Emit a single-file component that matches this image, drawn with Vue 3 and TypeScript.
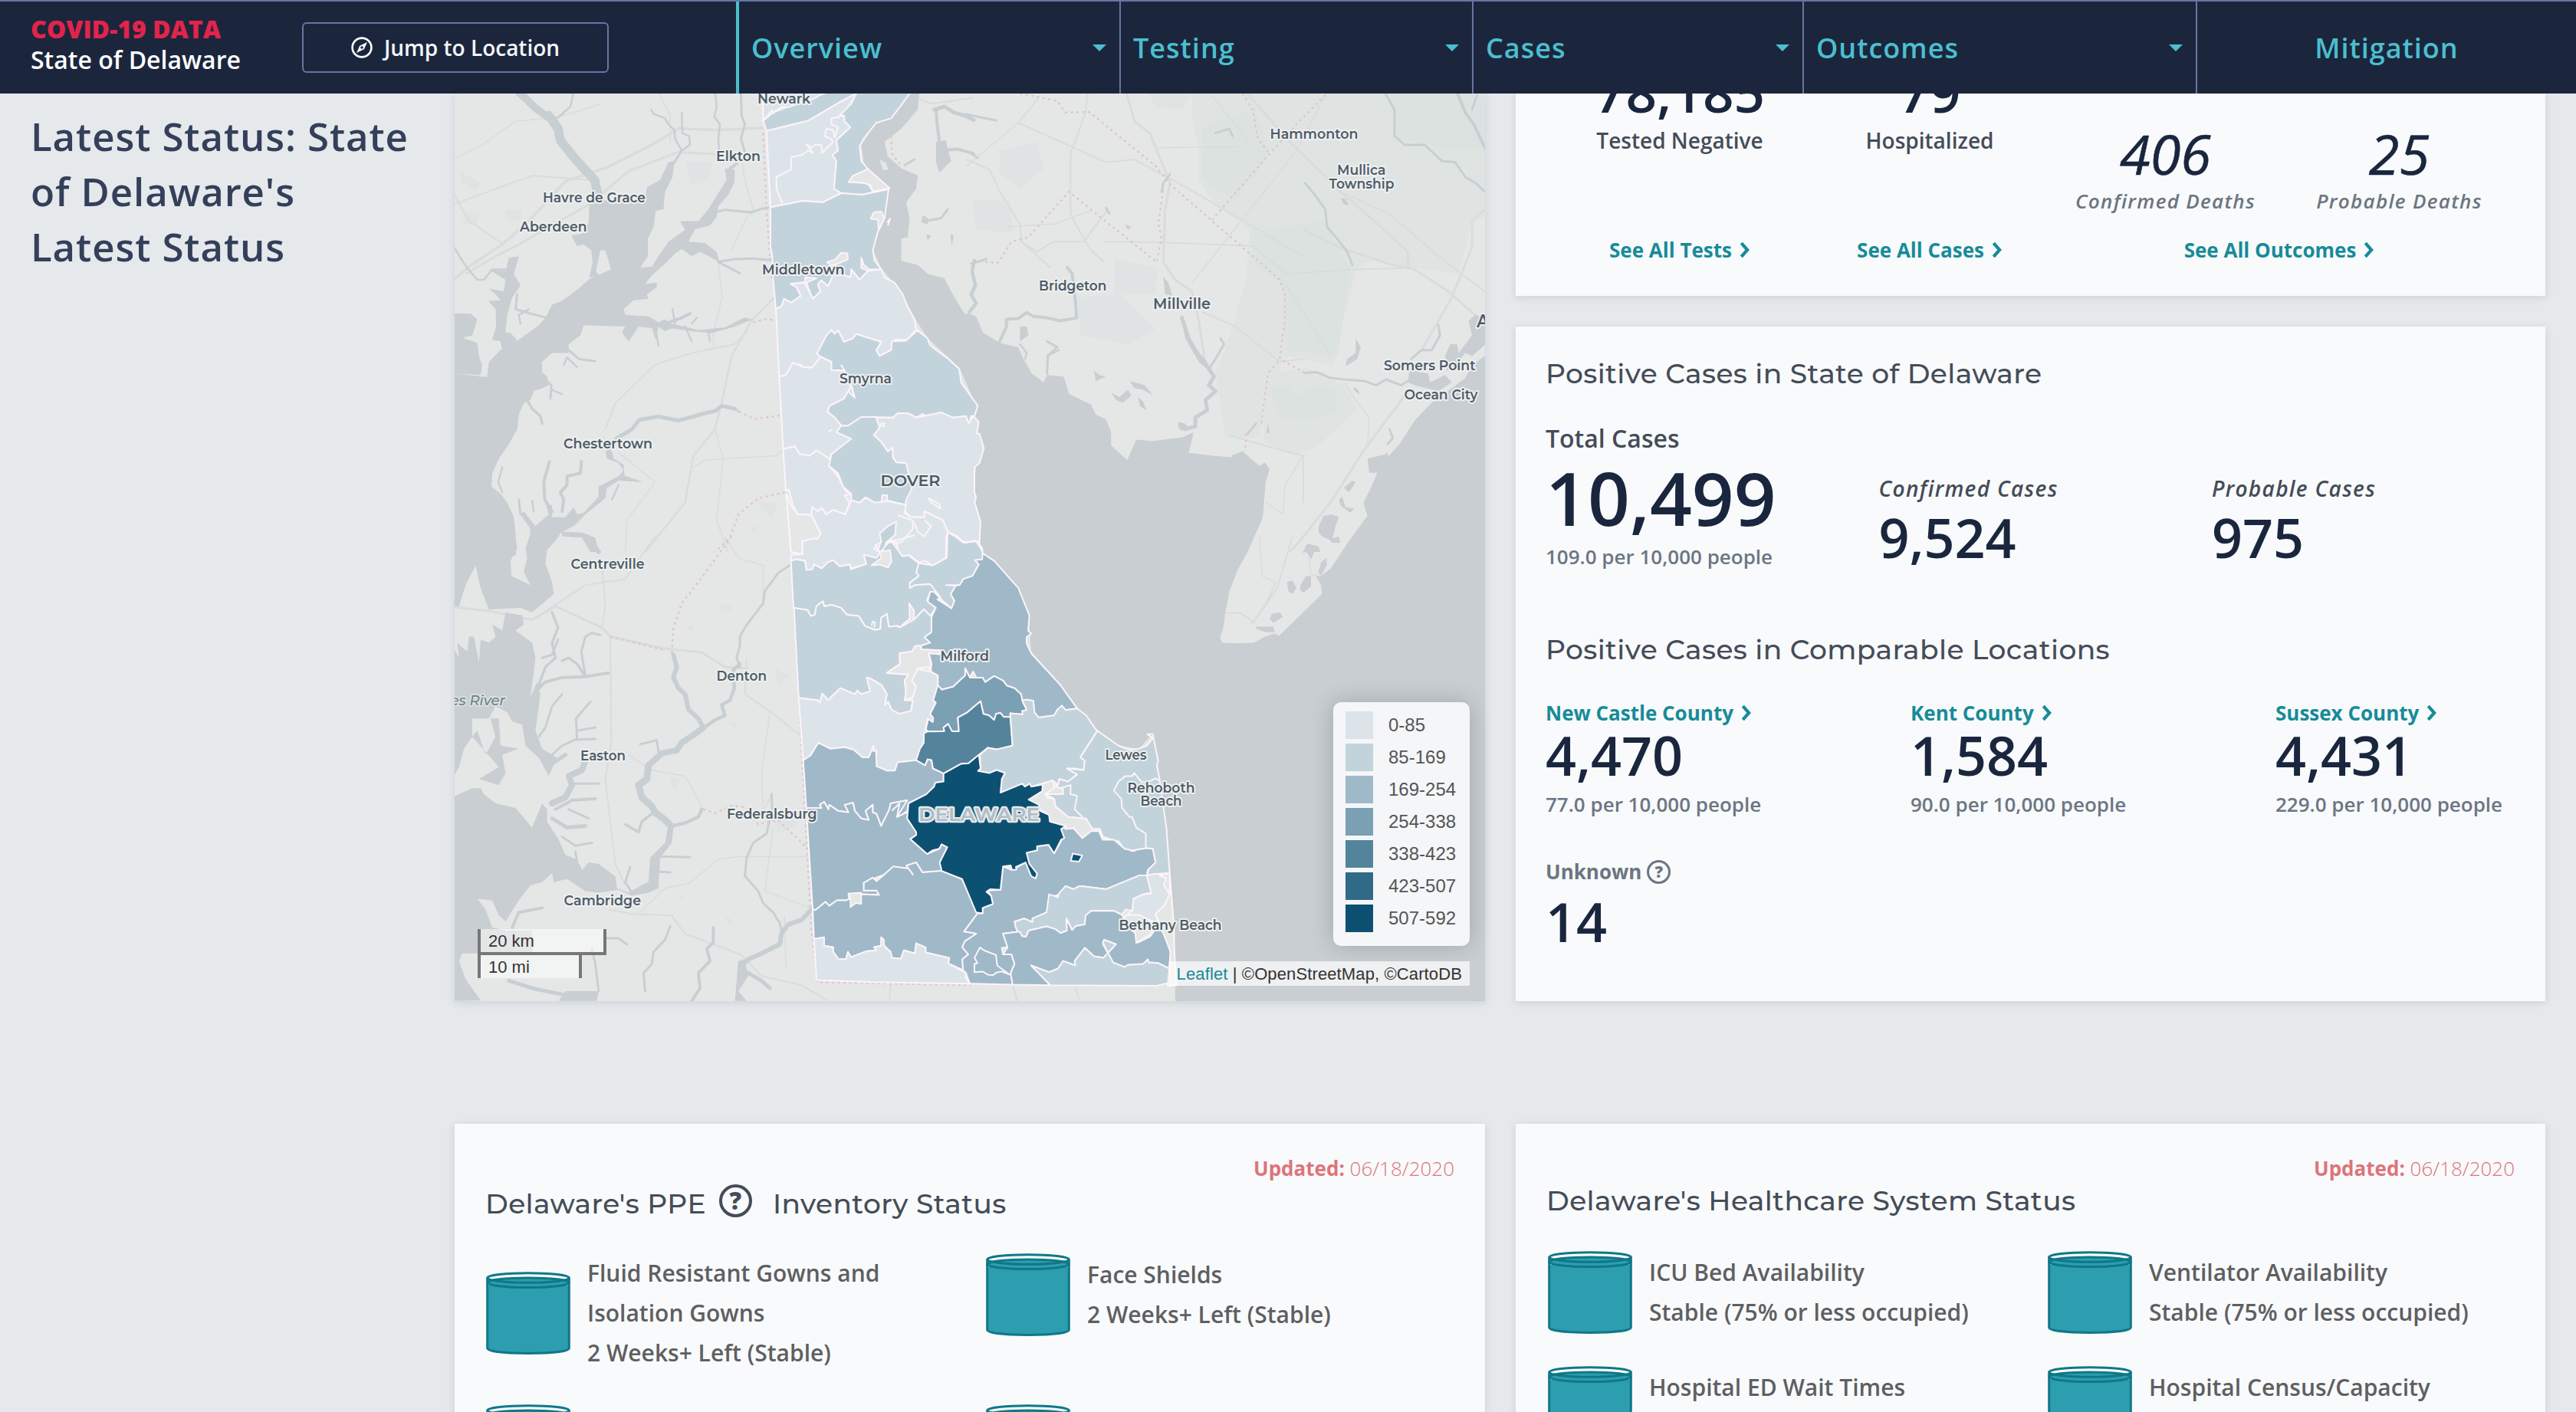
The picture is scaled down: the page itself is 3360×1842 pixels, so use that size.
<script setup lang="ts">
interface NavItem { label: string; width: number; caret: boolean }
interface Zip { level: number; pts: string }
interface Label { t: string; x1: number; x2: number; y: number; size: number; kind?: string }

const nav: NavItem[] = [
  { label: 'Overview', width: 500, caret: true },
  { label: 'Testing', width: 460, caret: true },
  { label: 'Cases', width: 431, caret: true },
  { label: 'Outcomes', width: 513, caret: true },
  { label: 'Mitigation', width: 496, caret: false },
]

const levels = ['#dce4ea', '#c2d3db', '#9fb9c8', '#7b9fb3', '#54849b', '#316a86', '#0c5172']
const ranges = ['0-85', '85-169', '169-254', '254-338', '338-423', '423-507', '507-592']
const LAND = -1

// Every map sheet has its own origin and scale; these project sheet points to map units.
const sheet = (ox: number, oy: number, sx: number, sy: number) => (s: string): string =>
  s.trim().split(/\s+/).map((p) => {
    const [x, y] = p.split(',').map(Number)
    return `${(ox + x * sx).toFixed(1)},${(oy + y * sy).toFixed(1)}`
  }).join(' ') + ' '
const A = sheet(590, 120, 0.43367, 0.38265)
const B = sheet(590, 700, 0.43367, 0.39541)
const C = sheet(1260, 120, 0.44005, 0.38265)
const D = sheet(980, 700, 1 / 3, 0.39541)
const E = sheet(1400, 700, 0.35714, 0.39541)

const water: string[] = [
  A('412,392 430,365 520,378 580,372 585,325 625,300 650,240 668,235 662,290 640,340 635,400 612,405 605,460 588,500 588,560 565,600 600,595 620,560 650,510 700,470 685,440 740,440 770,400 800,345 825,300 820,260 850,265 848,310 830,350 800,390 795,425 775,455 730,468 710,510 760,515 795,545 803,580 775,562 745,545 720,560 690,535 670,550 640,585 600,625 580,655 615,650 615,665 585,690 590,705 545,710 515,740 520,760 590,765 620,785 640,775 655,790 700,800 740,812 820,802 850,785 880,768 902,776 880,785 850,800 780,822 720,815 660,806 640,815 620,800 612,845 600,805 560,800 545,825 530,850 510,820 520,800 395,795 385,830 350,860 350,890 300,890 270,920 270,955 285,970 290,1000 270,1010 245,1020 235,1050 215,1060 200,1100 195,1150 170,1200 140,1250 120,1300 118,1345 145,1370 165,1400 185,1450 190,1500 192,1580 0,1580 0,960 105,972 110,920 145,880 200,845 230,820 260,795 280,770 300,725 330,712 380,670 415,635 478,605 460,540 445,540 432,610 440,625 412,632 422,580 418,540 395,520 375,525 358,490 400,480 410,440'),
  A('170,565 200,560 185,620 205,660 180,700 165,760 160,820 175,822 195,847 150,882 145,850 120,845 132,800 130,740 108,712 145,710 130,690 110,670 155,680 160,640 110,605 160,610'),
  A('0,755 55,755 75,775 60,830 30,838 75,855 80,900 90,930 85,965 0,960'),
  A('228,1580 235,1490 205,1440 215,1430 250,1480 290,1440 280,1400 300,1410 300,1450 340,1450 365,1415 375,1440 395,1435 440,1380 440,1345 500,1310 515,1290 500,1265 465,1250 460,1225 480,1225 485,1250 515,1270 518,1308 575,1330 500,1325 465,1350 460,1385 400,1440 370,1475 325,1505 310,1530 270,1580'),
  A('330,1500 390,1502 430,1520 440,1568 415,1568 390,1520 330,1515'),
  A('1455,170 1485,165 1490,195 1500,235 1465,275 1455,240'),
  B('0,0 190,0 195,40 175,80 178,130 235,160 215,115 225,70 220,40 232,0 320,0 285,40 280,90 300,150 305,190 240,250 205,235 110,240 85,170 70,95 40,160 20,230 0,230'),
  B('0,360 20,400 15,350 45,380 50,330 65,330 80,415 85,340 110,350 130,330 120,290 150,310 160,250 210,260 215,290 190,310 240,350 250,400 235,530 255,480 265,520 250,640 270,700 315,730 290,790 260,730 220,690 210,620 180,610 165,580 130,560 110,600 60,600 60,660 35,700 20,760 0,800'),
  B('0,860 30,845 60,830 85,830 95,850 130,880 190,895 240,960 270,880 285,900 285,940 320,1000 340,1050 375,1065 390,1100 410,1075 440,1080 490,1120 495,1160 530,1175 570,1150 590,1140 595,1060 640,1010 650,950 665,960 660,1010 625,1060 620,1160 590,1175 540,1185 500,1165 440,1175 400,1170 345,1130 305,1140 300,1110 270,1140 235,1150 200,1200 160,1270 140,1250 120,1200 75,1195 100,1230 120,1290 160,1300 240,1300 240,1375 30,1375 20,1400 40,1460 85,1530 0,1532'),
  B('320,1532 340,1500 440,1500 435,1532'),
  B('60,660 75,640 100,720 130,660 115,600 140,600 145,690 200,700 150,720 160,780 140,820 80,800 140,760'),
  B('860,1400 880,1395 890,1450 860,1500 885,1532 850,1532'),
]

const bay =
  A('1378,0 1405,0 1400,60 1350,125 1300,170 1310,220 1350,260 1400,285 1395,330 1365,375 1375,430 1370,495 1350,500 1350,575 1400,590 1430,620 1480,635 1500,680 1540,755 1560,758') +
  C('30,765 50,820 100,855 155,870 170,910 195,960 230,990 240,965 290,970 305,1030 370,1065 385,1100 415,1115 430,1160 430,1205 478,1255 505,1185 550,1190 640,1178 675,1160 660,1230 730,1240 790,1245 820,1225 870,1275 885,1262 900,1285 888,1330 880,1450 835,1568') +
  E('600,110 570,180 555,250 548,300 535,335 545,350 600,352 660,350 700,330 735,320 752,327 850,240 908,190 905,160 885,130 905,130 940,105 1010,10') +
  C('1190,1445 1178,1400 1200,1350 1230,1270 1285,1200 1330,1120 1380,1060 1440,1010 1480,975 1500,930 1545,895') +
  '1945,1310 1533,1310 ' +
  E('370,1300 350,1100 340,960 315,800 290,650 240,700 165,690 87,640') +
  D('1275,567 1210,490 1095,380 1085,260 1045,170 950,80 905,55') +
  A('1565,1400 1580,1215 1568,1050 1525,940 1430,840 1390,770 1355,690 1290,600 1265,540 1280,480 1310,330 1240,260 1230,180 1275,105 1320,90')

const eastWater: string[] = [
  C('1310,990 1315,940 1345,955 1370,960 1375,990 1420,965 1440,990 1400,1020 1330,1000'),
  C('1420,900 1435,860 1455,860 1460,890 1500,830 1490,780 1510,760 1540,770 1540,860 1500,900 1480,890 1450,930 1425,950'),
  C('1190,1250 1245,1235 1250,1225 1250,1260 1220,1298 1195,1298'),
  C('1045,1480 1060,1445 1085,1440 1105,1450 1095,1480 1085,1530 1055,1515 1045,1500'),
  C('1000,1568 1010,1540 1045,1550 1050,1568'), C('1105,1390 1115,1380 1125,1415 1150,1420 1140,1435 1110,1410'),
  C('1120,1350 1145,1325 1155,1330 1135,1365'), C('1155,840 1170,870 1160,910 1125,935 1130,910 1155,890'),
  C('585,630 600,650 612,695 590,690'), C('640,775 670,860 715,920 715,945 690,920 650,840'),
  C('430,1025 455,1040 480,1015 490,1035 465,1060 445,1050'), C('485,985 500,990 530,1000 555,1035 525,1015 500,1010'),
  C('510,1040 525,1055 535,1085 515,1070'), C('628,1125 650,1130 660,1145 640,1155 630,1145'),
  C('160,800 180,800 185,830 160,850'), C('380,950 395,965 415,970 385,985'),
  C('895,1130 900,1160 890,1165'), C('1110,360 1125,365 1135,385 1120,385'), C('470,450 490,460 480,470'),
  C('1150,1005 1165,1020 1165,1032 1150,1015'), C('820,1225 785,1240 800,1252 825,1240'),
  E('780,150 800,145 815,170 800,190 785,180'), E('830,160 850,130 868,130 868,165 840,185 828,175'),
  E('725,255 755,250 765,265 730,285 718,272'), E('668,297 730,297 735,315 700,315 668,305'),
  E('835,55 860,25 890,30 875,60 870,75 850,50'), E('935,10 970,0 975,20 945,20'), E('905,85 925,70 925,95 905,130 895,115'),
  A('1415,420 1430,430 1430,450 1410,445'), A('1425,485 1440,490 1430,505'), A('1498,485 1508,490 1502,525'),
]

const woods: string[] = [
  C('670,0 1568,0 1568,420 1500,440 1460,620 1330,600 1210,570 1160,600 1130,720 1090,930 940,900 870,1180 770,1180 740,960 790,800 830,640 840,470 730,370 690,300 690,190 670,90'),
  C('540,0 670,0 640,60 560,50'),
  C('900,960 1010,940 1120,1000 1160,1080 1040,1210 970,1240 880,1190'),
]
const woodsDark: string[] = [
  C('1240,0 1538,0 1538,190 1410,200 1380,180 1280,160 1270,60'),
  C('700,120 860,60 900,210 800,370 700,300'),
  C('840,480 1060,440 1140,600 1100,900 950,880 940,660 860,590'),
  C('900,1010 960,1000 980,1040 1030,1000 1100,1020 1100,1090 1010,1120 930,1110'),
]
const tints: string[] = [
  C('100,200 210,170 230,260 160,330 100,280'), C('20,370 130,370 140,480 30,470'), C('330,700 460,690 560,810 480,860 340,830'),
  C('440,570 570,600 560,690 440,690'), A('700,240 780,240 770,300 720,320'), A('20,270 90,310 70,335 30,310'),
  A('30,410 80,410 75,450 35,450'), A('160,400 210,405 200,440 160,435'), A('920,1400 980,1400 960,1450'), A('890,1480 920,1480 910,1510'),
  B('810,220 840,225 835,250 805,240'), B('700,290 725,295 720,315'), B('660,790 685,800 675,840 655,820'), B('830,610 855,610 850,640'),
  B('820,1250 850,1270 830,1280'), B('670,1180 695,1185 690,1200'), B('960,920 1000,900 1040,950 980,980'), B('970,430 1010,460 980,490'),
]

const rivers: { w: number; pts: string }[] = [
  { w: 10, pts: A('200,0 250,55 295,92') },
  { w: 12, pts: A('290,80 318,125 325,165 360,215 395,260 428,300 437,345 425,380') },
  { w: 2.5, pts: A('365,0 355,50 320,85 305,95') }, { w: 2.5, pts: A('790,0 795,50 788,85 805,110 800,160 803,205') },
  { w: 3, pts: A('868,0 870,80 880,110 868,160 880,205') }, { w: 2.5, pts: A('598,60 605,75 640,90 650,110 668,130 670,160 690,200 715,180 712,150 692,140 690,70') },
  { w: 3, pts: A('690,200 668,240 655,260') }, { w: 4, pts: A('825,270 855,245 860,225') },
  { w: 3, pts: A('790,410 820,402 900,410 930,398 950,395') }, { w: 3, pts: A('803,578 850,570 900,568 950,572 962,568') },
  { w: 3, pts: A('800,580 835,600 865,618') }, { w: 2.5, pts: A('0,520 30,575 45,600 75,640 95,640 120,605 160,605') },
  { w: 3, pts: A('195,690 190,740 220,750 250,760 285,770') }, { w: 2.5, pts: A('205,790 200,760 230,740') },
  { w: 4, pts: A('640,790 690,770 715,755') }, { w: 2.5, pts: A('670,790 662,740') }, { w: 2.5, pts: A('720,790 735,770') }, { w: 2.5, pts: A('700,800 720,850') },
  { w: 2.5, pts: A('770,815 775,850') }, { w: 2.5, pts: A('610,800 620,865') }, { w: 3, pts: A('350,880 380,910 430,918') }, { w: 2.5, pts: A('335,930 345,905 375,938') },
  { w: 3, pts: A('275,975 298,1000 295,1045') }, { w: 2.5, pts: A('298,1015 330,1030') }, { w: 3.5, pts: A('225,1050 240,1080 265,1105 270,1130') },
  { w: 5, pts: A('495,1180 540,1150 562,1118 620,1106 680,1120 720,1108 760,1095 790,1088 810,1070 850,1080') },
  { w: 2.5, pts: A('850,1080 862,1090') }, { w: 5, pts: A('470,1225 478,1195 500,1180') },
  { w: 4, pts: A('330,1430 335,1390 325,1365 345,1340 345,1310 385,1300 388,1260') }, { w: 4, pts: A('300,1430 278,1390 275,1330 292,1260') },
  { w: 3, pts: A('205,1440 200,1390') }, { w: 2.5, pts: A('245,1430 240,1395') }, { w: 2.5, pts: A('480,1390 500,1340') },
  { w: 2.5, pts: A('150,1365 138,1330 150,1280') },
  { w: 5, pts: A('1450,60 1480,50 1510,70 1540,80 1568,95') }, { w: 4, pts: A('1455,60 1458,110 1465,170 1470,200 1520,195 1568,210') },
  { w: 3, pts: A('1420,440 1470,430 1490,400') }, { w: 3, pts: A('1360,250 1390,230') },
  { w: 6, pts: B('405,0 440,50') }, { w: 3.5, pts: B('300,250 318,300 300,350 310,400 280,430 250,520') },
  { w: 3, pts: B('318,340 300,390 270,400') }, { w: 4, pts: B('250,510 280,480 330,465 400,462 440,455 470,450') },
  { w: 3.5, pts: B('400,462 375,420 350,400 330,410') }, { w: 3, pts: B('400,460 388,380 400,330 420,318 445,325') },
  { w: 3, pts: B('260,660 280,630 300,560 330,520') }, { w: 3, pts: B('300,720 330,690 370,670 430,668') }, { w: 3, pts: B('375,665 372,600 415,545') },
  { w: 3, pts: B('375,640 430,630') }, { w: 5, pts: B('285,760 340,720') }, { w: 8, pts: B('300,880 340,860 360,820 350,790 390,770 400,740') },
  { w: 3, pts: B('360,815 440,815') }, { w: 4, pts: B('310,900 360,870 430,865') }, { w: 5, pts: B('300,930 345,960 400,955') }, { w: 3, pts: B('350,900 410,930') },
  { w: 3, pts: B('330,990 370,1020 420,1010') }, { w: 3, pts: B('375,1070 370,1040') },
  { w: 2.5, pts: B('1025,20 1040,45') }, { w: 3, pts: B('1015,95 980,120 960,150 940,180 935,220 900,270 880,300 865,330 865,360 855,400 865,430') },
  { w: 4.5, pts: B('865,420 845,440 848,500 835,540 810,555 820,590 790,605 755,632') },
  { w: 6, pts: B('665,390 675,430 665,465 680,500 700,520 710,570 740,600 755,630') },
  { w: 8, pts: B('755,630 725,655 690,680 675,705 630,715 590,755') }, { w: 3, pts: B('565,685 615,672 620,710') },
  { w: 9, pts: B('590,755 585,800 560,820 570,860 600,890 610,910 640,935 658,955') },
  { w: 3.5, pts: B('605,910 570,940 560,975 520,950') }, { w: 4.5, pts: B('660,955 700,945 740,925 750,900') },
  { w: 3, pts: B('620,1055 715,1058') }, { w: 3, pts: B('615,1105 655,1108') }, { w: 3, pts: B('540,1175 520,1140 535,1090') },
  { w: 3, pts: B('960,850 962,900 945,980 905,1010 885,1060 880,1120 920,1170 935,1210 965,1240 985,1275 990,1300') },
  { w: 6, pts: B('1080,1230 1050,1265 1010,1280 990,1310 985,1345 930,1375 890,1395 865,1420') }, { w: 5, pts: B('890,1440 930,1465 955,1490') },
  { w: 4, pts: B('785,1290 785,1340 765,1360 775,1400 740,1440 745,1490 720,1532') }, { w: 3, pts: B('655,1285 640,1330 605,1370 600,1410 575,1440 580,1500') },
  { w: 3, pts: B('420,1360 430,1410 440,1500') }, { w: 3, pts: B('460,1325 500,1325 525,1345') }, { w: 5, pts: B('170,1465 240,1490 330,1510') },
  { w: 4, pts: B('170,1110 180,1180 160,1250') }, { w: 4, pts: B('270,1225 200,1240 180,1290') },
  { w: 3, pts: C('0,75 50,88 90,97') }, { w: 2.5, pts: C('0,200 35,225') },
  { w: 4.5, pts: C('25,575 18,610 28,660 15,690 30,720 10,750') }, { w: 3, pts: C('15,585 60,570') },
  { w: 4, pts: C('300,598 315,620 325,720 328,770 280,780 240,770 200,765 180,752 155,772 120,775 120,800 100,850') },
  { w: 3, pts: C('240,960 243,900 270,870 240,850') }, { w: 2.5, pts: C('240,900 275,880') }, { w: 2.5, pts: C('160,860 180,890 175,910') },
  { w: 5, pts: C('640,770 660,840 690,900 715,935 735,970 720,1000 740,1020 710,1050 715,1085 680,1110 680,1140 650,1150') },
  { w: 3, pts: C('720,945 745,900 765,860 755,840') }, { w: 3, pts: C('1240,0 1270,60 1270,150 1300,180 1360,180 1410,235 1450,240 1480,290 1510,310 1538,340') },
  { w: 4, pts: C('1455,0 1480,70 1505,110 1538,190') }, { w: 2.5, pts: C('1515,10 1500,60') },
  { w: 3, pts: C('1005,310 1040,360 1065,400 1070,460 1100,500 1130,545 1145,590') }, { w: 3, pts: C('740,140 780,125 790,150') },
  { w: 3, pts: C('1005,958 1040,955 1080,975 1120,980 1180,985 1215,1000 1245,980 1290,1000 1310,985') },
  { w: 3, pts: C('1320,910 1350,880 1380,880 1405,830 1400,795') }, { w: 3, pts: C('1255,1150 1265,1180 1250,1200') },
  { w: 3, pts: C('860,1130 835,1165') }, { w: 3, pts: C('580,340 585,310 605,280') }, { w: 3, pts: C('415,395 425,415') },
]

const roads: { w: number; pts: string }[] = [
  { w: 3.5, pts: A('0,645 50,595 150,520 230,440 340,305 470,255 600,180 680,125 800,130 935,122') },
  { w: 3, pts: A('40,620 130,560 200,520 290,460 410,385 530,270 680,205 790,212') }, { w: 2, pts: A('0,385 240,285 410,300') },
  { w: 2, pts: A('0,340 50,440 155,520') }, { w: 1.5, pts: A('0,230 90,180 190,100 320,85 450,40') }, { w: 1.5, pts: A('620,0 655,80 655,170') },
  { w: 2.5, pts: A('968,700 900,780 840,900 810,1060 790,1150 725,1240 700,1400 580,1568') }, { w: 2, pts: A('460,1150 490,1060 610,930 720,890 850,860 890,810') },
  { w: 1.5, pts: A('800,580 812,700 785,820 785,870') }, { w: 1.5, pts: A('840,540 880,440 905,400 880,300 868,210') }, { w: 1.5, pts: A('725,1280 760,1255 850,1248 975,1240 995,1220') },
  { w: 1.5, pts: A('790,1150 815,1250 795,1460 830,1568') }, { w: 1.5, pts: A('500,1230 610,1330 525,1460 520,1568') }, { w: 2, pts: A('1400,20 1440,40 1568,20') },
  { w: 3, pts: B('0,232 110,245 240,275 310,230 450,300 475,330 640,370 750,382 820,430 890,435') }, { w: 2, pts: B('240,275 400,160 520,140 610,0') },
  { w: 2, pts: B('475,330 478,680 460,800 490,1080 520,1150') }, { w: 2, pts: B('450,90 460,230 450,300') }, { w: 1.5, pts: B('820,0 860,70 935,95 935,220') },
  { w: 2, pts: B('885,400 880,520 960,580 1045,655') }, { w: 1.5, pts: B('955,580 930,780 935,910 960,850') }, { w: 2, pts: B('470,1230 540,1245 660,1250 700,1310 870,1380 930,1450 1050,1480 1130,1532') },
  { w: 1.5, pts: B('560,1245 640,1160 710,1145 800,1065 860,1055 1070,1057') }, { w: 1.5, pts: B('530,720 600,770 700,790 740,870 755,900') }, { w: 1.5, pts: B('965,960 940,1170 1080,1225') },
  { w: 3, pts: C('475,0 500,100 545,140 580,240 605,310 590,400 585,580 620,640 670,680 690,780 710,930') },
  { w: 2, pts: C('215,20 155,105 320,190 415,240 500,230 660,330 830,445 1000,560') }, { w: 2, pts: C('360,0 355,70 310,210 310,420 370,540 410,580') },
  { w: 2, pts: C('0,230 70,265 100,340 160,450 165,510 250,600') }, { w: 1.5, pts: C('0,255 155,105') }, { w: 2, pts: C('165,510 210,545 260,510 350,510 420,400') },
  { w: 1.5, pts: C('120,460 260,450 370,405') }, { w: 2, pts: C('410,510 560,512 850,525 950,620 1150,605 1310,600') }, { w: 1.5, pts: C('570,190 820,187') },
  { w: 3, pts: C('830,0 960,170 1110,340 1210,440 1310,545 1310,600') }, { w: 3, pts: C('1000,470 1110,530 1250,585 1330,605 1430,680 1538,790') },
  { w: 2, pts: C('1110,340 1260,420 1400,560 1538,680') }, { w: 3, pts: C('1538,400 1500,440 1500,530 1440,700 1350,880') },
  { w: 1.5, pts: C('1070,0 980,200 850,390 670,650') }, { w: 1.5, pts: C('720,0 840,170') }, { w: 3, pts: C('1310,1020 1180,1220 1080,1400 990,1530 960,1568') },
  { w: 2, pts: C('700,750 800,800 930,920 1000,910') }, { w: 2, pts: C('780,1170 900,1210 1000,1240 1000,1400') }, { w: 1.5, pts: C('1120,990 1160,1060 1195,1110 1190,1200') },
  { w: 1.5, pts: C('1000,1240 945,1340 940,1440 890,1400') }, { w: 1.5, pts: C('940,640 1080,900') },
  { w: 2, pts: E('800,0 745,170 650,290') }, { w: 2, pts: E('550,252 610,252 665,285') }, { w: 1.5, pts: E('680,0 690,130 740,150') },
  { w: 2, pts: E('740,150 700,230 650,290') }, { w: 1.5, pts: E('860,70 870,130 910,120') },
  { w: 1.5, pts: D('130,1250 135,1420') }, { w: 1.5, pts: D('545,1478 540,1532') }, { w: 2.5, pts: D('1025,1485 1040,1532') }, { w: 1.5, pts: D('1265,1485 1285,1532') },
]

const borders: string[] = [
  A('935,140 945,400 960,640'), A('905,785 940,774 973,778'), A('862,1090 910,1115 990,1102'), A('1000,1365 920,1385 860,1440 835,1520 790,1568'),
  B('840,0 800,60 740,150 690,220 665,300 660,385'), B('475,330 640,375'), B('755,900 790,912 840,888 880,893 920,950 980,935 1070,1030'),
  B('1020,60 1050,700 1080,1300 1098,1470 1560,1480'), A('1320,150 1322,210 1350,250'),
  C('160,5 270,30 295,70 365,68 560,250 610,320 730,440 930,640 945,690 945,780 930,910 1005,958'), C('1065,10 980,110 900,210 730,435'),
  C('820,5 850,60 865,160 900,210'), C('40,578 95,582 135,510 185,495 305,340 565,580 580,500 570,450 585,330'), C('925,920 895,960 875,1130'), C('830,1165 828,1225'),
]

const zips: Zip[] = [
  { level: 1, pts: A('935,98 965,70 1010,50 1120,5 1130,-10 1220,-10 1215,5 1165,35 1105,75 1070,98 945,133') },
  { level: 0, pts: A('933,-10 1130,-10 1090,22 1010,52 990,50 965,72 962,62 935,98') },
  { level: 0, pts: A('945,133 1070,98 1105,75 1165,35 1215,5 1190,55 1165,80 1180,85 1197,120 1155,165 1160,200 1145,215 1155,235 1150,330 1168,345 1115,376 1055,371 957,393') },
  { level: 1, pts: A('1215,5 1225,-10 1385,-10 1350,45 1320,90 1275,105 1240,155 1225,185 1230,235 1250,262 1195,305 1250,312 1265,340 1315,328 1232,350 1170,345 1148,330 1155,235 1143,215 1160,200 1155,165 1197,120 1180,100 1178,80 1165,80 1200,40') },
  { level: LAND, pts: A('1250,262 1315,328 1265,340 1258,318 1237,310 1192,307 1205,285') },
  { level: 1, pts: A('957,393 1055,371 1115,376 1170,345 1232,350 1312,332 1300,430 1280,475 1265,540 1270,575 1290,605 1255,605 1238,590 1230,565 1230,600 1250,610 1225,640 1200,605 1198,632 1180,625 1145,625 1130,662 1110,642 1100,655 1107,680 1085,705 1078,690 1065,650 1095,635 1062,632 1060,648 1018,653 1035,665 1048,695 1020,718 998,705 990,730 973,740 965,640 962,560 957,530') },
  { level: LAND, pts: A('1268,410 1290,408 1300,430 1282,472 1280,435 1258,432') },
  { level: LAND, pts: A('1127,580 1150,572 1170,548 1188,550 1190,570 1160,585 1140,592') },
  { level: 0, pts: A('973,740 990,730 998,705 1020,718 1048,695 1035,665 1018,655 1060,650 1078,690 1085,705 1107,680 1100,655 1110,642 1130,662 1145,625 1180,625 1198,632 1200,605 1225,640 1250,610 1290,605 1300,632 1330,650 1355,690 1368,730 1390,775 1395,810 1368,845 1330,845 1320,880 1285,900 1275,880 1290,852 1215,825 1205,840 1178,852 1160,812 1150,825 1140,812 1125,845 1097,892 1108,903 1082,940 1055,938 1050,930 1025,925 1003,965 983,970') },
  { level: 1, pts: A('1097,892 1125,830 1140,812 1150,825 1160,812 1178,852 1205,840 1215,825 1290,852 1275,880 1285,900 1320,880 1322,850 1365,848 1398,812 1430,840 1435,860 1455,880 1490,908 1525,945 1530,990 1568,1050') + C('35,1070 25,1105 15,1105 10,1130') + A('1553,1130 1545,1105 1505,1110 1470,1092 1425,1105 1415,1098 1395,1110 1370,1095 1340,1095 1325,1110 1230,1108 1190,1138 1170,1138 1150,1110 1128,1090 1135,1070 1178,1045 1200,1000 1210,1042 1195,1025 1180,950 1140,948 1140,920 1108,903') },
  { level: 0, pts: A('983,970 1003,965 1025,922 1055,938 1082,940 1108,903 1140,920 1140,948 1180,950 1170,932 1182,955 1210,1042 1200,1000 1178,1045 1135,1070 1128,1090 1150,1110 1170,1138 1155,1160 1200,1182 1185,1205 1140,1235 1133,1255 1095,1222 1075,1240 1045,1235 1030,1208 995,1217') },
  { level: 0, pts: A('995,1217 1030,1208 1045,1235 1075,1240 1095,1222 1138,1252 1133,1275 1160,1310 1175,1345 1185,1362 1200,1370 1180,1375 1195,1400 1182,1440 1145,1425 1125,1440 1110,1418 1100,1430 1082,1415 1080,1442 1040,1440 1025,1410 1012,1355 1003,1360') },
  { level: LAND, pts: A('1005,1370 1020,1412 1040,1440 1080,1442 1108,1505 1098,1525 1052,1530 1052,1575 1018,1568') },
  { level: 1, pts: A('1170,1138 1190,1138 1230,1108 1275,1108 1285,1145 1280,1165 1268,1170 1288,1190 1310,1225 1325,1212 1325,1245 1335,1262 1365,1265 1383,1350 1365,1408 1335,1400 1308,1392 1308,1375 1293,1375 1290,1405 1270,1400 1243,1382 1225,1400 1200,1392 1200,1370 1175,1345 1160,1300 1133,1275 1140,1235 1200,1182 1155,1160') },
  { level: 0, pts: A('1275,1110 1325,1110 1340,1095 1370,1095 1395,1110 1470,1092 1505,1110 1545,1105 1553,1130') + C('22,1105 38,1125 32,1165 40,1165 53,1215 40,1265 25,1280 25,1365 30,1380 26,1400 43,1465 40,1535 30,1530 0,1537') + A('1568,1533 1535,1535 1490,1500 1475,1460 1440,1440 1420,1430 1420,1450 1380,1450 1360,1430 1365,1390 1383,1350 1365,1265 1335,1262 1325,1245 1325,1212 1310,1225 1288,1190 1268,1170 1285,1145') },
  { level: 0, pts: A('1080,1442 1082,1415 1100,1430 1110,1418 1125,1440 1145,1425 1182,1440 1200,1392 1225,1400 1243,1382 1270,1400 1310,1395 1365,1408 1360,1435 1380,1450 1420,1450 1420,1430 1475,1460 1490,1500') + D('762,5 762,70 710,95 680,80 655,85 620,62 580,65 570,25 545,12 525,30 525,60 510,85 470,95 455,90 440,60 450,90 390,105 385,92 345,98 320,78 300,85 275,105 245,92 240,108 215,110 210,80 175,75 155,80 155,60 200,58 200,15 250,5') + A('1098,1525 1108,1505') },
  { level: 1, pts: A('1285,1505 1310,1480 1335,1465 1332,1510 1305,1535 1300,1568 1280,1565 1290,1530') },
  { level: 1, pts: D('768,-15 800,-5 830,20 880,15 905,50 905,75 875,78 890,92 865,130 830,140 815,160 762,160 800,162 780,190 795,212 783,237 740,205 728,207 700,157 640,160 620,170 620,152 655,130 645,118 655,88 710,95 765,70') },
  { level: 1, pts: C('0,1537 30,1530 48,1555 48,1568') + D('905,45 880,15 830,20 790,-5 768,-15') },
  { level: 1, pts: D('155,80 175,75 210,80 215,110 240,108 245,92 275,105 300,85 320,78 345,98 385,92 390,108 450,90 440,60 490,70 525,30 545,12 570,40 590,65 615,62 655,88 645,118 655,130 620,152 620,170 640,160 700,157 740,200 700,182 687,210 722,235 700,262 675,240 635,275 637,245 618,220 620,270 580,300 572,295 538,297 530,255 508,268 505,305 485,308 460,300 445,295 420,262 375,258 350,235 315,225 285,230 280,213 255,230 248,258 232,262 220,242 165,235') },
  { level: LAND, pts: D('543,45 548,82 535,102 500,92 470,95 510,70 500,50') },
  { level: 1, pts: D('167,235 220,242 232,262 248,258 255,230 280,213 285,230 315,225 350,235 375,258 420,262 445,295 485,308 505,305 508,268 530,255 538,297 572,295 580,300 635,275 675,240 705,265 705,315 678,332 700,350 665,360 640,362 630,380 580,385 582,420 530,450 615,455 600,475 605,515 600,540 632,540 625,575 580,585 550,572 535,545 522,555 530,520 510,490 470,470 452,465 465,510 430,520 415,508 405,520 348,500 300,540 278,518 268,548 262,540 185,532') },
  { level: LAND, pts: D('640,362 665,360 665,372 738,375 738,388 695,385 705,430 650,435 630,475 645,495 632,530 600,540 605,515 600,475 615,455 530,450 582,420 580,385 630,378') },
  { level: 0, pts: D('185,532 262,540 268,548 278,518 300,540 348,500 405,520 415,508 430,520 465,510 452,465 470,470 510,490 530,520 522,555 535,545 550,572 580,585 625,575 632,540 605,540 632,530 645,495 628,475 650,437 695,445 700,430 702,445 730,458 730,500 712,540 722,548 700,585 712,598 710,612 690,600 680,640 692,645 675,652 675,680 660,700 645,738 572,745 562,772 530,772 490,758 488,705 478,708 478,690 460,728 435,728 400,703 365,695 310,700 262,680 232,722 203,738') },
  { level: 2, pts: D('905,55 950,80 1045,170 1088,260 1083,310 1095,320 1077,332 1077,352 1095,385 1210,490 1275,567 1230,572 1215,558 1212,570 1198,570 1185,590 1125,597 1108,580 1103,542 1080,538 1060,542 1055,520 1030,500 1000,492 985,475 950,460 915,480 905,465 880,465 868,445 855,465 837,435 837,458 790,495 745,505 730,490 730,458 702,445 705,420 695,385 738,388 738,375 665,372 665,360 700,350 678,332 705,315 705,265 722,235 690,215 700,182 715,182 740,205 728,207 783,237 795,212 780,190 800,162 815,160 830,140 865,130 890,92 875,78 903,75') },
  { level: 3, pts: D('745,505 790,495 837,458 837,435 855,465 880,465 905,465 915,480 950,460 985,475 1000,492 1030,500 1055,520 1062,545 1078,572 1060,575 1062,587 1013,583 1013,595 988,595 975,582 958,585 950,605 930,590 908,585 897,543 845,580 808,597 812,642 785,642 770,618 752,630 755,642 690,643 683,635 692,602 710,612 712,598 700,585 722,548 712,540 730,490') },
  { level: 4, pts: D('675,650 690,643 755,642 752,630 770,618 785,642 812,642 808,597 845,580 897,543 908,585 930,590 950,605 958,585 975,582 988,595 1013,595 1022,690 960,702 925,697 890,720 850,748 820,750 752,782 710,765 705,738 690,735 680,755 645,738 660,700 675,680') },
  { level: 1, pts: D('1013,583 1062,587 1060,575 1078,572 1060,540 1080,538 1103,542 1108,580 1125,597 1185,590 1198,570 1215,558 1230,572 1275,567 1310,590 1353,642 1288,728 1305,740 1300,770 1265,765 1235,765 1275,785 1240,808 1205,800 1200,820 1180,805 1095,825 1090,815 1070,825 1060,815 975,845 980,800 992,780 960,770 932,780 887,773 897,765 895,720 925,697 960,702 1022,690') },
  { level: 1, pts: E('87,640 165,690 205,703 240,700 268,690 290,665 270,652 290,652 310,740 305,755 315,800 330,900 340,960 352,1110 300,1113 268,1118 275,1097 300,1075 290,1030 265,1028 210,1037 185,1030 165,1005 105,1000 95,965 60,965 30,930') + D('1300,930 1240,925 1190,890 1185,865 1150,850 1220,850 1220,832 1180,822 1200,820 1205,800 1240,808 1275,785 1235,765 1300,770 1305,740 1288,728 1353,642') },
  { level: LAND, pts: D('1140,815 1180,805 1185,830 1150,850 1158,862 1185,865 1190,890 1240,925 1310,930 1335,965 1365,965 1375,990 1410,1000 1375,1000 1360,972 1330,972 1295,995 1260,962 1230,965 1230,955 1168,940 1165,918 1130,900 1085,868 1138,840') },
  { level: 2, pts: D('1230,955 1228,965 1260,962 1295,995 1330,972 1360,972 1375,1000 1420,1000 1460,1030 1500,1037') + E('210,1037 265,1028 290,1030 300,1075 272,1100 268,1118 240,1118 120,1163 30,1153') + D('1285,1153 1260,1163 1230,1153 1205,1180 1170,1190 1165,1230 1155,1240 1100,1260 1100,1272 1068,1260 1030,1270 1035,1290 1050,1303 985,1310 1003,1355 980,1357 985,1378 1000,1368 1018,1378 1030,1410 1015,1440 1022,1478 855,1475 840,1440 828,1430 825,1395 848,1378 825,1355 835,1335 880,1310 832,1303 885,1243 905,1243 905,1225 945,1212 938,1185 925,1168 975,1165 985,1088 1020,1100 1073,1075 1112,1128 1118,1112 1088,1085 1077,1043 1118,1035 1118,1022 1163,1017 1185,1045 1215,1000 1212,965') },
  { level: 2, pts: D('203,738 232,722 262,680 310,700 365,695 400,703 435,728 460,728 478,690 478,708 488,705 490,758 530,772 562,772 572,745 645,738 680,755 690,735 705,738 710,765 752,782 752,808 720,812 715,825 685,850 615,880 610,905 570,930 555,925 550,905 610,870 545,880 540,900 508,955 490,915 475,910 475,885 447,905 460,935 430,930 405,905 398,878 365,885 380,910 340,905 305,885 302,900 285,875 268,885 275,895 215,895') },
  { level: 2, pts: D('215,895 275,895 268,885 285,875 302,900 305,885 340,905 380,910 365,885 398,878 405,905 430,930 460,935 447,905 475,885 475,910 490,915 508,955 540,900 545,880 610,870 570,925 612,908 610,930 645,975 645,985 622,998 688,1047 735,1030 745,1015 767,1025 737,1075 750,1103 670,1108 645,1075 632,1078 630,1115 607,1085 615,1095 555,1090 520,1115 475,1130 440,1142 440,1168 490,1168 500,1182 430,1180 380,1178 385,1210 370,1200 335,1200 305,1218 290,1205 250,1233 240,1228') },
  { level: 2, pts: D('240,1228 250,1233 290,1205 305,1218 335,1200 370,1200 430,1180 500,1182 490,1168 440,1168 440,1142 475,1125 490,1137 520,1115 555,1088 615,1095 632,1115 607,1085 645,1075 670,1108 745,1103 825,1130 885,1243 832,1303 880,1310 835,1335 825,1355 848,1378 825,1395 828,1430 770,1408 775,1390 682,1372 682,1355 645,1342 640,1375 597,1365 585,1393 550,1390 545,1370 520,1350 518,1330 508,1322 508,1350 480,1355 490,1365 450,1368 390,1388 378,1370 370,1395 340,1393 320,1370 320,1355 285,1350 285,1322 245,1328') },
  { level: LAND, pts: D('380,1178 430,1175 430,1212 410,1208 388,1222 388,1195') },
  { level: 0, pts: D('245,1328 285,1322 285,1350 320,1355 320,1370 340,1393 370,1395 378,1370 390,1388 450,1368 490,1365 480,1355 508,1350 508,1322 518,1330 520,1350 545,1370 550,1390 585,1393 597,1365 640,1375 645,1342 682,1355 682,1372 775,1390 770,1408 840,1440 838,1455 855,1475 475,1470 255,1463') },
  { level: 1, pts: D('1030,1270 1068,1260 1100,1272 1100,1260 1155,1240 1165,1180 1200,1190 1205,1175 1230,1153 1260,1163 1285,1153') + E('30,1153 120,1163 240,1118 268,1118 285,1175 255,1180 220,1195 215,1235 190,1230 178,1248 150,1235') + D('1420,1235 1330,1235 1308,1250 1305,1280 1270,1285 1255,1298 1233,1260 1235,1300 1210,1308 1190,1295 1155,1286 1085,1300 1075,1320 1050,1318 1035,1290') },
  { level: 0, pts: E('268,1118 300,1113 345,1112 315,1118 340,1128 330,1150 352,1180 330,1220 300,1245 310,1272 250,1262 200,1245 215,1235 220,1195 255,1180 285,1177') },
  { level: 2, pts: D('985,1310 1050,1303 1060,1318 1075,1320 1085,1300 1155,1286 1190,1295 1210,1308 1235,1300 1233,1260 1255,1298 1270,1285 1305,1280 1308,1250 1330,1235 1420,1235') + E('178,1248 200,1290 230,1310 235,1340 280,1320 300,1295 325,1302 340,1330 355,1370 350,1425 310,1407 275,1405 272,1395 255,1410 200,1413 187,1420 145,1405 108,1345 112,1330 155,1345 110,1390 75,1385 42,1357 5,1400') + D('1265,1400 1268,1415 1220,1400 1200,1425 1165,1437 1095,1415 1170,1480 1022,1478 1015,1440 1030,1410 1018,1378 985,1378 1003,1355') },
  { level: 1, pts: D('1170,1480 1095,1415 1165,1437 1200,1425 1220,1400 1268,1415 1265,1400 1305,1357') + E('42,1357 75,1385 110,1390 155,1345 112,1330 108,1340 145,1405 187,1420 200,1413 255,1410 272,1395 275,1405 310,1407 350,1425 350,1472 305,1482') },
  { level: LAND, pts: E('352,1110 368,1290 368,1350 376,1480 345,1482 350,1430 355,1370 325,1300 300,1245 330,1220 352,1180') },
  { level: LAND, pts: E('190,1250 240,1248 300,1275 285,1310 230,1340 225,1300 200,1290 185,1270') },
  { level: 6, pts: D('752,782 820,750 850,748 890,720 897,765 887,773 932,780 960,770 992,780 980,800 975,845 1060,815 1070,825 1090,815 1095,825 1140,818 1138,840 1085,868 1125,885 1130,905 1165,918 1168,940 1230,955 1212,965 1225,995 1212,1000 1185,1045 1163,1017 1118,1022 1118,1035 1077,1043 1088,1080 1118,1112 1112,1128 1095,1120 1073,1075 1035,1090 1038,1098 1020,1100 1015,1085 985,1088 975,1165 935,1163 920,1172 938,1185 945,1212 905,1225 905,1243 880,1240 825,1130 745,1103 737,1075 767,1025 745,1015 735,1030 710,1035 688,1047 622,998 645,985 645,975 610,930 615,880 685,850 715,825 720,812 752,808') },
  { level: 6, pts: D('1258,1046 1295,1052 1282,1072 1250,1070') },
]

const innerLines: string[] = [
  A('993,380 975,330 975,290 1018,265 1020,222 1050,215 1070,200 1085,208 1065,178 1080,190 1090,180 1110,180 1112,208 1145,170 1140,160 1120,150 1125,125 1145,130 1150,155 1160,120 1140,110 1140,90 1165,85'),
  E('315,805 300,798 270,810 250,810 222,780 215,790 190,790 165,808 148,838 175,865 178,895 205,925 215,925 230,960 265,980 265,1025'),
  D('895,1355 910,1365 957,1380 962,1415 1010,1445 980,1435 960,1438 945,1447 925,1445 905,1435 873,1437 873,1410 885,1407 873,1390 895,1355'),
  A('1432,1385 1465,1405 1468,1420 1440,1400 1432,1385'), A('1308,445 1317,432 1310,455'), A('1132,1158 1142,1150'), A('1288,1130 1300,1130 1298,1140 1288,1138 1288,1130'),
  A('1340,1443 1385,1460 1385,1490 1350,1535 1310,1535 1305,1545'), A('1390,1470 1400,1500 1420,1515 1440,1480 1420,1460'), D('550,15 600,5 640,-5'),
  D('470,295 475,280 485,285 480,300'), D('550,905 580,880 570,925'), D('1205,830 1250,820 1248,850 1275,855 1265,900 1295,925'), D('485,25 500,50 480,40 500,20'),
]

const labels: Label[] = [
  { t: 'Newark', x1: 988, x2: 1057, y: 134.5, size: 18 }, { t: 'Elkton', x1: 934, x2: 992, y: 210, size: 18 },
  { t: 'Havre de Grace', x1: 708, x2: 842, y: 264, size: 18 }, { t: 'Aberdeen', x1: 678, x2: 765.5, y: 302, size: 18 },
  { t: 'Middletown', x1: 994, x2: 1101.5, y: 358, size: 18 }, { t: 'Smyrna', x1: 1095, x2: 1163, y: 499.5, size: 18 },
  { t: 'Chestertown', x1: 735, x2: 851, y: 585, size: 18 }, { t: 'DOVER', x1: 1148.5, x2: 1226.5, y: 634, size: 21 },
  { t: 'Centreville', x1: 744.5, x2: 840.5, y: 742, size: 18 }, { t: 'Denton', x1: 934.5, x2: 1000, y: 888, size: 18 },
  { t: 'Easton', x1: 757, x2: 816, y: 991.5, size: 18 }, { t: 'Federalsburg', x1: 948, x2: 1065.5, y: 1067.5, size: 18 },
  { t: 'Cambridge', x1: 735.5, x2: 836, y: 1181, size: 18 }, { t: 'Hammonton', x1: 1656.5, x2: 1771.5, y: 181, size: 18 },
  { t: 'Mullica', x1: 1744, x2: 1807.5, y: 228, size: 18 }, { t: 'Township', x1: 1733.5, x2: 1818.5, y: 246, size: 18 },
  { t: 'Bridgeton', x1: 1355, x2: 1443.5, y: 379, size: 18 }, { t: 'Millville', x1: 1504, x2: 1579, y: 403, size: 20 },
  { t: 'Somers Point', x1: 1805, x2: 1924.5, y: 482.5, size: 18 }, { t: 'Ocean City', x1: 1831.5, x2: 1927.5, y: 520.5, size: 18 },
  { t: 'Atlantic City', x1: 1926, x2: 2064, y: 427, size: 24 }, { t: 'Milford', x1: 1226.5, x2: 1290, y: 861.5, size: 18 },
  { t: 'Lewes', x1: 1441.5, x2: 1495.5, y: 990.5, size: 18 }, { t: 'Rehoboth', x1: 1470.5, x2: 1558.5, y: 1033.5, size: 18 },
  { t: 'Beach', x1: 1487.5, x2: 1541.5, y: 1051, size: 18 }, { t: 'Bethany Beach', x1: 1459.5, x2: 1593.5, y: 1213, size: 18 },
  { t: 'Miles River', x1: 560, x2: 659, y: 920, size: 18, kind: 'river' }, { t: 'DELAWARE', x1: 1198, x2: 1356, y: 1070.5, size: 24, kind: 'state' },
]

const counties = [
  { name: 'New Castle County', n: '4,470', per: '77.0 per 10,000 people' },
  { name: 'Kent County', n: '1,584', per: '90.0 per 10,000 people' },
  { name: 'Sussex County', n: '4,431', per: '229.0 per 10,000 people' },
]
const ppe: string[][] = [['Fluid Resistant Gowns and', 'Isolation Gowns', '2 Weeks+ Left (Stable)'], ['Face Shields', '2 Weeks+ Left (Stable)'], [], []]
const health: string[][] = [
  ['ICU Bed Availability', 'Stable (75% or less occupied)'], ['Ventilator Availability', 'Stable (75% or less occupied)'],
  ['Hospital ED Wait Times'], ['Hospital Census/Capacity'],
]
</script>

<template>
  <div class="page">
    <header class="top">
      <div class="brand"><strong>COVID-19 DATA</strong><span>State of Delaware</span></div>
      <button class="jump">
        <svg width="28" height="28" viewBox="0 0 28 28"><circle cx="14" cy="14" r="12.4" fill="none" stroke="#fff" stroke-width="2.6" /><path fill-rule="evenodd" d="M21 7 16.8 16.3 7 21 11.2 11.7ZM14 12.2a1.8 1.8 0 1 0 0 3.6a1.8 1.8 0 1 0 0-3.6Z" fill="#fff" /></svg>
        <span>Jump to Location</span>
      </button>
      <nav>
        <a v-for="n in nav" :key="n.label" :class="{ plain: !n.caret }" :style="{ width: n.width + 'px' }"><span>{{ n.label }}</span><i v-if="n.caret" class="caret"></i></a>
      </nav>
    </header>

    <main>
      <aside><h2>Latest Status: State of Delaware's Latest Status</h2></aside>
      <div class="content">
        <section class="row">
          <div class="map">
            <svg width="1344" height="1184" viewBox="593 122 1344 1184">
              <rect x="593" y="122" width="1344" height="1184" fill="#e4e7e6" />
              <polygon v-for="(p, i) in tints" :key="'t' + i" :points="p" fill="#dfe3e4" />
              <polygon v-for="(p, i) in woods" :key="'w' + i" :points="p" fill="#dfe4e3" />
              <polygon v-for="(p, i) in woodsDark" :key="'k' + i" :points="p" fill="#dce2e0" />
              <polyline v-for="(r, i) in roads" :key="'r' + i" :points="r.pts" fill="none" stroke="#d9dcdc" :stroke-width="r.w" stroke-linejoin="round" />
              <polyline v-for="(p, i) in borders" :key="'b' + i" :points="p" fill="none" stroke="#dfc5c9" stroke-width="2.4" stroke-dasharray="3 4.5" />
              <g fill="#c8ced1">
                <polygon v-for="(p, i) in water" :key="'a' + i" :points="p" />
                <polygon :points="bay" />
                <polygon v-for="(p, i) in eastWater" :key="'e' + i" :points="p" />
              </g>
              <polyline v-for="(r, i) in rivers" :key="'v' + i" :points="r.pts" fill="none" stroke="#c8cfd3" :stroke-width="r.w" stroke-linejoin="round" stroke-linecap="round" />
              <polygon points="1147,208 1155,212 1159,221 1152,222" fill="#e4e7e6" />
              <polygon v-for="(z, i) in zips" :key="'z' + i" :points="z.pts" :fill="z.level < 0 ? '#e4e7e6' : levels[z.level]" stroke="#fdf4fa" stroke-width="2" stroke-linejoin="round" />
              <polyline v-for="(p, i) in innerLines" :key="'l' + i" :points="p" fill="none" stroke="#fdf4fa" stroke-width="2" stroke-linejoin="round" />
              <text v-for="l in labels" :key="l.t" :class="['place', l.kind]" :x="l.x1" :y="l.y" :font-size="l.size" :textLength="l.x2 - l.x1" lengthAdjust="spacingAndGlyphs">{{ l.t }}</text>
            </svg>
            <div class="scale"><div class="km">20 km</div><div class="mi">10 mi</div></div>
            <div class="legend">
              <div v-for="(r, i) in ranges" :key="r" class="range"><i :style="{ background: levels[i] }"></i><span>{{ r }}</span></div>
            </div>
            <div class="credit"><a>Leaflet</a> | ©OpenStreetMap, ©CartoDB</div>
          </div>

          <div class="stack">
            <div class="card summary">
              <div class="col"><div class="num">78,185</div><div class="lab">Tested Negative</div><a class="link">See All Tests<svg class="chev" viewBox="0 0 14 21"><path d="M3 2 10.500 10.500 3 19" /></svg></a></div>
              <div class="col"><div class="num">79</div><div class="lab">Hospitalized</div><a class="link">See All Cases<svg class="chev" viewBox="0 0 14 21"><path d="M3 2 10.500 10.500 3 19" /></svg></a></div>
              <div class="col deaths">
                <div class="pair">
                  <div><div class="inum">406</div><div class="ilab">Confirmed Deaths</div></div>
                  <div><div class="inum">25</div><div class="ilab">Probable Deaths</div></div>
                </div>
                <a class="link">See All Outcomes<svg class="chev" viewBox="0 0 14 21"><path d="M3 2 10.500 10.500 3 19" /></svg></a>
              </div>
            </div>
            <div class="card cases">
              <h3>Positive Cases in State of Delaware</h3>
              <div class="totals">
                <div><div class="tl">Total Cases</div><div class="big">10,499</div><div class="per">109.0 per 10,000 people</div></div>
                <div class="sub"><div class="il">Confirmed Cases</div><div class="num">9,524</div></div>
                <div class="sub"><div class="il">Probable Cases</div><div class="num">975</div></div>
              </div>
              <h3>Positive Cases in Comparable Locations</h3>
              <div class="counties">
                <div v-for="c in counties" :key="c.name"><a class="link">{{ c.name }}<svg class="chev" viewBox="0 0 14 21"><path d="M3 2 10.500 10.500 3 19" /></svg></a><div class="num">{{ c.n }}</div><div class="per">{{ c.per }}</div></div>
              </div>
              <div class="unk"><span>Unknown</span><i class="help small">?</i></div>
              <div class="num last">14</div>
            </div>
          </div>
        </section>

        <section class="row second">
          <div class="card status ppe">
            <div class="upd"><b>Updated:</b> 06/18/2020</div>
            <h3><span>Delaware's PPE</span><i class="help">?</i><span>Inventory Status</span></h3>
            <div class="items">
              <div v-for="(lines, i) in ppe" :key="i" class="item">
                <svg class="drum" viewBox="0 0 110 108"><path d="M1.7 18V100C1.7 108 108.3 108 108.3 100V18Z" fill="#2d9db0" /><ellipse cx="55" cy="8" rx="53.3" ry="6.3" fill="#f8fafc" /><ellipse cx="55" cy="14.3" rx="53.3" ry="6.3" fill="#2d9db0" /><g fill="none" stroke="#0f7887" stroke-width="3"><path d="M1.7 8V100C3 108.5 107 108.5 108.3 100V8" /><ellipse cx="55" cy="8" rx="53.3" ry="6.3" /><ellipse cx="55" cy="14.3" rx="53.3" ry="6.3" /></g></svg>
                <div><p v-for="l in lines" :key="l">{{ l }}</p></div>
              </div>
            </div>
          </div>
          <div class="card status health">
            <div class="upd"><b>Updated:</b> 06/18/2020</div>
            <h3><span>Delaware's Healthcare System Status</span></h3>
            <div class="items">
              <div v-for="(lines, i) in health" :key="i" class="item">
                <svg class="drum" viewBox="0 0 110 108"><path d="M1.7 18V100C1.7 108 108.3 108 108.3 100V18Z" fill="#2d9db0" /><ellipse cx="55" cy="8" rx="53.3" ry="6.3" fill="#f8fafc" /><ellipse cx="55" cy="14.3" rx="53.3" ry="6.3" fill="#2d9db0" /><g fill="none" stroke="#0f7887" stroke-width="3"><path d="M1.7 8V100C3 108.5 107 108.5 108.3 100V8" /><ellipse cx="55" cy="8" rx="53.3" ry="6.3" /><ellipse cx="55" cy="14.3" rx="53.3" ry="6.3" /></g></svg>
                <div><p v-for="l in lines" :key="l">{{ l }}</p></div>
              </div>
            </div>
          </div>
        </section>
      </div>
    </main>
  </div>
</template>

<style>
html, body { margin: 0; background: #e5e9ec; }
</style>

<style scoped>
.page { width: 3360px; height: 1842px; overflow: hidden; background: #e5e9ec; font-family: "Open Sans", "Noto Sans", sans-serif; display: flex; flex-direction: column; }
.page * { box-sizing: border-box; }
h2, h3, p { margin: 0; font-weight: 400; }
i { font-style: normal; }
.top { height: 122px; flex: none; background: #1b263d; border-top: 2px solid #66769f; display: flex; align-items: stretch; }
.brand { width: 394px; padding: 16px 0 0 40px; display: flex; flex-direction: column; font-size: 32px; line-height: 40px; color: #fff; white-space: nowrap; }
.brand strong { font-weight: 800; color: #e3234b; }
.brand span { font-weight: 600; }
.jump { width: 400px; height: 66px; margin: 27px 0 0; padding: 0; background: transparent; border: 2px solid #66769f; border-radius: 6px; color: #f4f6fa; display: flex; align-items: center; justify-content: center; gap: 15px; font: 600 28px/40px "Open Sans", sans-serif; }
nav { display: flex; margin-left: 166px; }
nav a { display: flex; align-items: center; justify-content: space-between; padding: 0 17px 0 16px; border-left: 2px solid #66769f; color: #4bbfcf; font-size: 36px; font-weight: 600; letter-spacing: 1px; }
nav a:first-child { border-left: 4px solid #4bbfcf; }
nav a.plain { justify-content: center; padding: 0; }
.caret { border: 9px solid transparent; border-top-color: #4bbfcf; border-bottom: 0; }
main { flex: 1; min-height: 0; display: flex; }
aside { width: 593px; padding: 19px 40px 0 40px; flex: none; }
h2 { font-size: 51px; line-height: 72px; font-weight: 600; color: #34405a; letter-spacing: .9px; }
.content { width: 2727px; }
.row { display: grid; grid-template-columns: 1344px 1343px; column-gap: 40px; }
.second { margin-top: 160px; }
.card, .map { background: #f8fafc; box-shadow: 0 2px 10px rgba(60, 70, 90, .15); }
.map { position: relative; height: 1184px; }
.map > svg { display: block; overflow: hidden; }
.place { font-family: "Montserrat", "Inter", sans-serif; font-weight: 600; fill: #4f5b67; stroke: #edf0f0; stroke-width: 4px; paint-order: stroke; stroke-linejoin: round; }
.place.river { font-style: italic; font-weight: 500; fill: #6e828c; stroke: #d9dfe0; }
.place.state { fill: #b1bcc6; font-weight: 600; stroke: #e6eaeb; stroke-width: 4.5px; }
.scale { position: absolute; left: 30px; bottom: 30px; font: 22px/26px "Liberation Sans", Arial, sans-serif; color: #333; }
.scale div { background: rgba(255, 255, 255, .5); border: 4px solid #777; border-top: 0; padding: 3px 0 0 10px; }
.km { width: 168px; height: 34px; padding-top: 4px; }
.scale .mi { width: 136px; height: 30px; border-bottom: 0; }
.legend { position: absolute; right: 20px; bottom: 72px; width: 178px; height: 318px; padding: 12px 16px; border-radius: 10px; background: #f4f6f8; box-shadow: 0 0 30px rgba(0, 0, 0, .2); font: 24px/36px "Liberation Sans", Arial, sans-serif; color: #555; display: flex; flex-direction: column; gap: 6px; }
.range { display: flex; gap: 20px; }
.range i { width: 36px; height: 36px; flex: none; }
.credit { position: absolute; right: 20px; bottom: 20px; height: 32px; padding: 0 10px; background: rgba(255, 255, 255, .7); font: 22px/33px "Liberation Sans", Arial, sans-serif; letter-spacing: .12px; color: #333; white-space: nowrap; }
.credit a { color: #178b98; }
.stack { display: flex; flex-direction: column; gap: 40px; }
.summary { height: 264px; overflow: hidden; display: grid; grid-template-columns: 326px 326px 586px; padding: 0 0 42px 51px; align-items: end; text-align: center; clip-path: inset(0 -20px -20px -20px); }
.col { display: flex; flex-direction: column; justify-content: flex-end; align-items: center; height: 222px; }
.num { font-size: 71px; line-height: 80px; font-weight: 600; color: #1a263e; white-space: nowrap; }
.cases .num { font-size: 70px; }
.lab { margin-top: 3px; font-size: 28px; line-height: 40px; font-weight: 600; color: #454c57; }
.col .link { margin-top: 105px; }
.deaths .link { margin-top: 26px; }
.pair { display: grid; grid-template-columns: 305px 305px; margin-left: 8px; }
.inum { font-size: 72px; line-height: 80px; font-style: italic; font-weight: 400; color: #1a263e; -webkit-text-stroke: .6px #1a263e; }
.ilab { margin-top: 2px; font-size: 26px; line-height: 40px; font-style: italic; font-weight: 600; letter-spacing: 1.3px; color: #6c757f; white-space: nowrap; }
.link { display: flex; align-items: center; gap: 9px; font-size: 26px; line-height: 36px; font-weight: 700; color: #178b98; white-space: nowrap; }
.chev { width: 15px; height: 22px; }
.chev path { fill: none; stroke: #178b98; stroke-width: 4; }
.cases { height: 880px; padding: 36px 0 0 39px; }
h3 { font-family: "Montserrat", "Inter", sans-serif; font-size: 36px; line-height: 50px; color: #454c57; font-weight: 500; white-space: nowrap; letter-spacing: .4px; }
.totals { display: grid; grid-template-columns: repeat(3, 434.5px); margin: 38px 0 78px; }
.tl { font-size: 32px; line-height: 44px; font-weight: 600; color: #454c57; }
.big { font-size: 96px; line-height: 110px; font-weight: 600; color: #1a263e; }
.per { font-size: 26px; line-height: 36px; font-weight: 600; color: #6c7683; white-space: nowrap; }
.totals .per { margin-top: 4px; }
.sub { padding-top: 67px; }
.il { font-size: 28px; line-height: 40px; font-style: italic; font-weight: 600; letter-spacing: 1.3px; color: #454c57; margin-bottom: 4px; }
.counties { display: grid; grid-template-columns: repeat(3, 476px); margin-top: 40px; }
.counties .num, .num.last { line-height: 74px; }
.counties .per { margin-top: 9px; }
.unk { display: flex; align-items: center; gap: 7px; margin: 52px 0 10px; font-size: 26px; line-height: 36px; font-weight: 700; color: #6c757f; }
.help { display: inline-block; width: 43px; height: 43px; border: 4px solid #454c57; border-radius: 50%; font: 800 31px/35px "Open Sans", sans-serif; text-align: center; letter-spacing: 0; color: #454c57; }
.help.small { width: 31px; height: 31px; border: 3px solid #6c757f; font: 800 21px/25px "Open Sans", sans-serif; color: #6c757f; }
.status { height: 480px; padding: 38px 40px 0; }
.upd { text-align: right; font-size: 26px; line-height: 40px; font-weight: 300; color: #dd7479; }
.upd b { font-weight: 700; }
.status h3 { line-height: 44px; display: flex; align-items: flex-start; }
.ppe h3 { margin-top: 4px; }
.ppe h3 .help { margin: -3px 27px 0 17px; }
.items { display: grid; grid-template-columns: 652px 652px; row-gap: 41px; margin: 43px 0 0 1px; }
.health .items { row-gap: 42px; margin: 44px 0 0 2px; }
.item { display: flex; align-items: center; align-self: start; gap: 22px; min-height: 108px; }
.health .item:nth-child(n + 3) { align-items: flex-start; }
.health .item:nth-child(n + 3) > div { padding-top: 2px; }
.drum { width: 110px; height: 108px; flex: none; }
.item p { font-size: 30px; line-height: 52px; font-weight: 600; color: #5e5f61; white-space: nowrap; }
</style>
